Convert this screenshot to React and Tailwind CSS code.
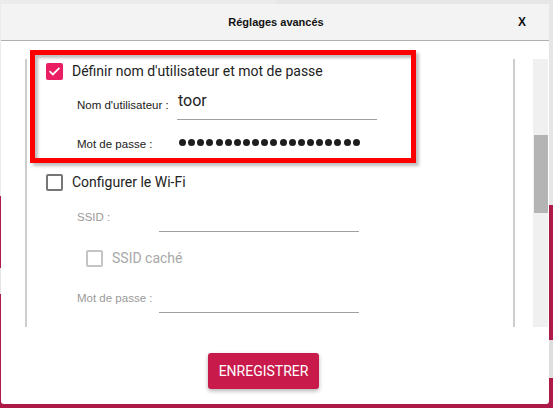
import React from 'react';

const Field = ({ label, labelClass, disabled, children }) => (
  <div className="flex items-start">
    <div
      className={`${labelClass} mt-[15px] text-[11.5px] leading-[14px] font-['Liberation_Sans',sans-serif] ${disabled ? 'text-[#9a9a9a]' : 'text-[#1a1a1a]'}`}
    >
      {label}
    </div>
    <div className="w-[200px] h-[37px] border-b-[1.5px] border-[#a0a0a0] flex items-center">{children}</div>
  </div>
);

export default function App() {
  const dots = Array.from({ length: 20 });

  return (
    <div className="relative w-[553px] h-[408px] overflow-hidden bg-[#ebebeb] font-['Roboto',sans-serif]">
      {/* fenêtre principale derrière la boîte de dialogue */}
      <div className="absolute inset-0 flex">
        <div className="w-[276px] flex flex-col">
          <div className="h-[196px] bg-[#ebebeb]" />
          <div className="h-[72px] bg-[#ad1a48]" />
          <div className="h-[26px] bg-[#e4e4e4]" />
          <div className="flex-1 bg-[#ad1a48]" />
        </div>
        <div className="flex-1 flex flex-col">
          <div className="h-[205px] bg-[#e6e6e6]" />
          <div className="h-[135px] bg-[#ad1a48]" />
          <div className="h-[38px] bg-[#dedede]" />
          <div className="flex-1 bg-[#ad1a48]" />
        </div>
      </div>

      {/* boîte de dialogue */}
      <div className="absolute left-[1px] top-[4px] w-[548px] h-[400px] bg-white flex flex-col rounded-b-[3px]">
        <div className="h-[37px] bg-[#f3f3f3] border-b border-[#b0b0b0] relative flex items-center justify-center">
          <span className="text-[11px] font-bold text-[#111] font-['Liberation_Sans',sans-serif] ml-[2px]">Réglages avancés</span>
          <span className="absolute left-[517px] text-[12px] font-bold text-[#111] font-['Liberation_Sans',sans-serif]">X</span>
        </div>

        <div className="mt-[18px] h-[268px] flex overflow-hidden">
          <div className="ml-[24px] w-[490px] border-x-2 border-[#cdcdcd] flex flex-col text-[#222]">
            <div className="h-[24px] flex items-center pl-[19px]">
              <div className="w-[17px] h-[17px] rounded-[2px] bg-[#e91e63] flex items-center justify-center">
                <svg width="13" height="13" viewBox="0 0 24 24" fill="none" stroke="white" strokeWidth="3.2" strokeLinecap="square">
                  <path d="M4 12.5l5 5L20 6.5" />
                </svg>
              </div>
              <span className="ml-[9px] text-[14px]">Définir nom d'utilisateur et mot de passe</span>
            </div>

            <div className="pl-[50px]">
              <Field label="Nom d'utilisateur :" labelClass="w-[100px]">
                <span className="ml-[1px] text-[16px] text-[#222] -mt-[1px]">toor</span>
              </Field>
              <div className="mt-[2px]">
                <Field label="Mot de passe :" labelClass="w-[100px]">
                  <div className="ml-[2px] mt-[5px] flex gap-[2.15px]">
                    {dots.map((_, i) => (
                      <span key={i} className="inline-block w-[7px] h-[7px] rounded-full bg-[#1e1e1e]" />
                    ))}
                  </div>
                </Field>
              </div>
            </div>

            <div className="mt-[11px] h-[24px] flex items-center pl-[19px]">
              <div className="w-[17px] h-[17px] rounded-[2px] border-2 border-[#767676]" />
              <span className="ml-[9px] text-[14px]">Configurer le Wi-Fi</span>
            </div>

            <div className="pl-[50px] mt-[1px]">
              <Field label="SSID :" labelClass="w-[82px]" disabled />
            </div>

            <div className="mt-[14px] h-[25px] flex items-center pl-[59px]">
              <div className="w-[17px] h-[17px] rounded-[2px] border-2 border-[#c4c4c4]" />
              <span className="ml-[9px] text-[14px] text-[#a8a8a8]">SSID caché</span>
            </div>

            <div className="pl-[50px] mt-[5px]">
              <Field label="Mot de passe :" labelClass="w-[82px]" disabled />
            </div>
          </div>

          <div className="ml-[18px] w-[15px] bg-[#f0f0f0] flex flex-col">
            <div className="mt-[76px] h-[78px] ml-[1px] w-[14px] bg-[#b4b4b4]" />
          </div>
        </div>

        <div className="mt-[26px] ml-[207px] w-[111px] h-[36px] rounded-[3px] bg-[#c91a4c] shadow-[0_2px_4px_rgba(0,0,0,0.3)] flex items-center justify-center">
          <span className="text-[14px] text-white">ENREGISTRER</span>
        </div>
      </div>

      {/* cadre rouge d'annotation */}
      <div className="absolute left-[30px] top-[50px] w-[386px] h-[113px] border-[5px] border-[#ff0000] shadow-[3px_3px_3px_rgba(0,0,0,0.25),inset_3px_3px_3px_rgba(0,0,0,0.25)]" />
    </div>
  );
}
